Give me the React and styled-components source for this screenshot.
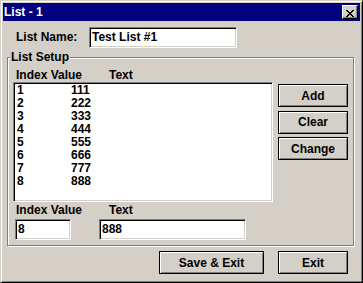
import React from 'react'
import styled, { createGlobalStyle } from 'styled-components'

const GlobalStyle = createGlobalStyle`
  * { box-sizing: border-box; }
  html, body { margin: 0; padding: 0; background: #D4D0C8; }
  body {
    font-family: "Liberation Sans", Arial, sans-serif;
    font-size: 12px;
    font-weight: bold;
    color: #000;
  }
`

const entries = [
  [1, 111], [2, 222], [3, 333], [4, 444],
  [5, 555], [6, 666], [7, 777], [8, 888],
]

export default function App() {
  return (
    <>
      <GlobalStyle />
      <Window>
        <TitleBar>
          <Title>List - 1</Title>
          <CloseButton aria-label="Close">
            <svg width="8" height="7" viewBox="0 0 8 7" shapeRendering="crispEdges">
              <path d="M0 0h2v1h-2zM6 0h2v1h-2zM1 1h2v1h-2zM5 1h2v1h-2zM2 2h4v1h-4zM3 3h2v1h-2zM2 4h4v1h-4zM1 5h2v1h-2zM5 5h2v1h-2zM0 6h2v1h-2zM6 6h2v1h-2z" fill="#000" />
            </svg>
          </CloseButton>
        </TitleBar>

        <NameRow>
          <NameLabel>List Name:</NameLabel>
          <TextBox $w={148}>Test List #1</TextBox>
        </NameRow>

        <Group>
          <Legend>List Setup</Legend>
          <Header>
            <span>Index Value</span>
            <span>Text</span>
          </Header>
          <ListRow>
            <ListBox>
              {entries.map(([i, v]) => (
                <ListItem key={i}>
                  <span>{i}</span>
                  <span>{v}</span>
                </ListItem>
              ))}
            </ListBox>
            <SideButtons>
              <Button $w={70}>Add</Button>
              <Button $w={70}>Clear</Button>
              <Button $w={70}>Change</Button>
            </SideButtons>
          </ListRow>
          <EditRow>
            <Field $w={84}>
              <FieldLabel $indent={1}>Index Value</FieldLabel>
              <TextBox $w={56}>8</TextBox>
            </Field>
            <Field>
              <FieldLabel $indent={10}>Text</FieldLabel>
              <TextBox $w={147}>888</TextBox>
            </Field>
          </EditRow>
        </Group>

        <Footer>
          <Button $w={105}>Save &amp; Exit</Button>
          <Button $w={70}>Exit</Button>
        </Footer>
      </Window>
    </>
  )
}

// styled-components

const Window = styled.div`
  width: 363px;
  height: 283px;
  padding: 2px;
  background: #D4D0C8;
  border: 1px solid;
  border-color: #D4D0C8 #000 #000 #D4D0C8;
  box-shadow: inset 1px 1px #fff, inset -1px -1px #808080;
  display: flex;
  flex-direction: column;
`
const TitleBar = styled.div`
  height: 18px;
  flex: none;
  background: #000080;
  color: #fff;
  display: flex;
  align-items: center;
  justify-content: space-between;
  padding: 0 2px 0 1px;
`
const Title = styled.span`
  line-height: 18px;
`
const CloseButton = styled.button`
  width: 16px;
  height: 14px;
  margin: 0;
  padding: 2px 0 0 3px;
  display: block;
  background: #D4D0C8;
  border: 1px solid;
  border-color: #fff #000 #000 #fff;
  box-shadow: inset -1px -1px #808080;
  svg { display: block; }
`
const NameRow = styled.div`
  display: flex;
  align-items: center;
  margin-top: 6px;
  padding-left: 13px;
`
const NameLabel = styled.label`
  width: 73px;
  line-height: 13px;
`
const TextBox = styled.div`
  width: ${p => p.$w}px;
  height: 21px;
  padding: 0 2px;
  background: #fff;
  border: 1px solid;
  border-color: #808080 #fff #fff #808080;
  box-shadow: inset 1px 1px #000, inset -1px -1px #D4D0C8;
  line-height: 19px;
  white-space: nowrap;
`
const Group = styled.div`
  margin: 9px 6px 0 4px;
  padding-bottom: 5px;
  border: 1px solid #808080;
  box-shadow: inset 1px 1px #fff, 1px 1px #fff;
  display: flex;
  flex-direction: column;
`
const Legend = styled.span`
  align-self: flex-start;
  margin: -7px 0 0 2px;
  padding: 0 1px;
  line-height: 13px;
  background: #D4D0C8;
`
const Header = styled.div`
  display: grid;
  grid-template-columns: 93px auto;
  margin-top: 5px;
  padding-left: 8px;
  line-height: 13px;
`
const ListRow = styled.div`
  display: flex;
  align-items: flex-start;
  gap: 5px;
  padding-left: 5px;
`
const ListBox = styled.div`
  width: 260px;
  height: 120px;
  padding: 1px;
  background: #fff;
  border: 1px solid;
  border-color: #808080 #fff #fff #808080;
  box-shadow: inset 1px 1px #000, inset -1px -1px #D4D0C8;
`
const ListItem = styled.div`
  display: grid;
  grid-template-columns: 54px auto;
  padding-left: 2px;
  line-height: 13px;
`
const SideButtons = styled.div`
  display: flex;
  flex-direction: column;
  gap: 3.5px;
  padding-top: 2px;
`
const Button = styled.button`
  width: ${p => p.$w}px;
  height: 23px;
  margin: 0;
  padding: 0;
  font: inherit;
  color: #000;
  background: #D4D0C8;
  border: 1px solid #000;
  box-shadow: inset 1px 1px #fff, inset -1px -1px #808080;
`
const EditRow = styled.div`
  display: flex;
  margin-top: 2px;
  padding-left: 7px;
`
const Field = styled.div`
  width: ${p => (p.$w ? `${p.$w}px` : 'auto')};
  display: flex;
  flex-direction: column;
  gap: 2px;
`
const FieldLabel = styled.span`
  padding-left: ${p => p.$indent}px;
  line-height: 13px;
`
const Footer = styled.div`
  display: flex;
  justify-content: flex-end;
  gap: 14px;
  margin-top: 5px;
  padding-right: 12px;
`
